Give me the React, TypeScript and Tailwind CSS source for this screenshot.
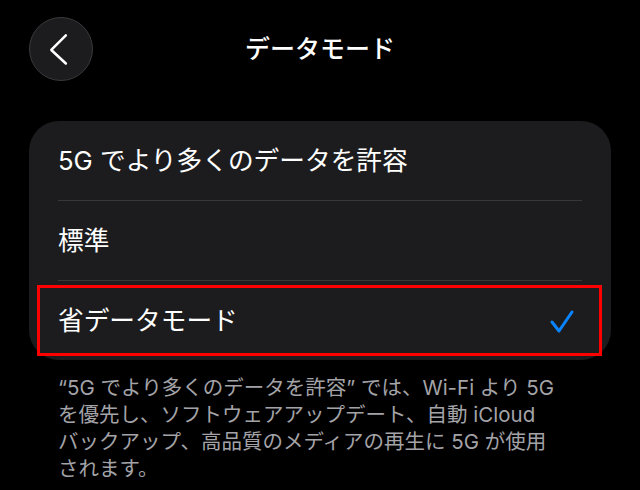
const font = { fontFamily: '"Inter", "Noto Sans CJK JP", sans-serif' }

const App = () => {
  const options = [
    { id: 1, label: "5G でより多くのデータを許容", selected: false },
    { id: 2, label: "標準", selected: false },
    { id: 3, label: "省データモード", selected: true }
  ]

  return (
    <div className="w-[640px] h-[490px] bg-black overflow-hidden text-white" style={font}>
      {/* Header */}
      <header className="px-[29px] pt-[17px] grid grid-cols-[64px_1fr_64px] items-center">
        <button className="w-[64px] h-[64px] rounded-full bg-[#1c1c1e] border border-[#3a3a3c] flex items-center justify-center">
          <svg width="64" height="64" viewBox="0 0 64 64" fill="none">
            <polyline
              points="37,18 22,33 37,47"
              stroke="white"
              strokeWidth="2.6"
              strokeLinecap="round"
              strokeLinejoin="round"
            />
          </svg>
        </button>
        <h1 className="text-center text-[25px] font-medium leading-none pt-[1px]">データモード</h1>
        <div />
      </header>

      {/* Options */}
      <div className="px-[29px] mt-[40px]">
        <div className="bg-[#1c1c1e] rounded-[30px] px-[29px]">
          {options.map((opt, i) => (
            <div
              key={opt.id}
              className={
                i < options.length - 1
                  ? "h-[80px] flex items-center justify-between border-b border-[#38383a]"
                  : "relative h-[79px] flex items-center justify-between"
              }
            >
              <span className="text-[25.7px] leading-none">{opt.label}</span>
              {opt.selected && (
                <>
                  <svg width="26" height="26" viewBox="0 0 26 26" fill="none" className="mr-[7px] mt-[2px]">
                    <polyline
                      points="3,13 10,22 23,3"
                      stroke="#0a84ff"
                      strokeWidth="3"
                      strokeLinecap="round"
                      strokeLinejoin="round"
                    />
                  </svg>
                  <div className="absolute left-[-21px] right-[-20px] top-[4px] bottom-[4px] border-[3px] border-[#ff0000]" />
                </>
              )}
            </div>
          ))}
        </div>
      </div>

      {/* Footnote */}
      <p className="px-[58px] mt-[14px] text-[20.5px] leading-[27px] text-[#a3a3a8]">
        “5G でより多くのデータを許容” では、Wi-Fi より 5G
        <br />
        を優先し、ソフトウェアアップデート、自動 iCloud
        <br />
        バックアップ、高品質のメディアの再生に 5G が使用
        <br />
        されます。
      </p>
    </div>
  )
}

export default App
